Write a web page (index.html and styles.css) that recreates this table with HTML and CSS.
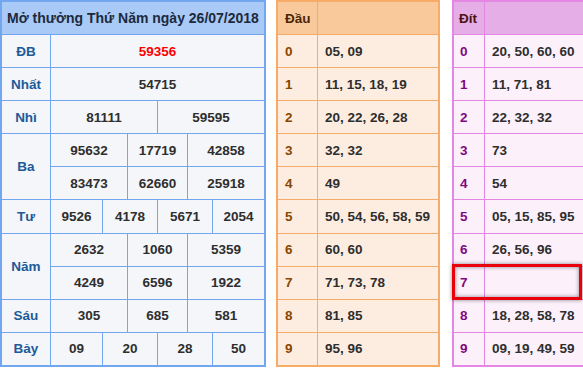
FILE: index.html
```html
<!DOCTYPE html>
<html lang="vi">
<head>
  <meta charset="UTF-8" />
  <meta name="viewport" content="width=device-width, initial-scale=1.0" />
  <title>Kết quả xổ số 26/07/2018</title>
  <link rel="stylesheet" href="styles.css">
</head>
<body>

  <div class="board">

    <!-- Bảng kết quả -->
    <div class="result">
      <div class="result-title">Mở thưởng Thứ Năm ngày 26/07/2018</div>

      <div class="lbl">ĐB</div>
      <div class="num span-6 special">59356</div>

      <div class="lbl">Nhất</div>
      <div class="num span-6">54715</div>

      <div class="lbl">Nhì</div>
      <div class="num span-3">81111</div>
      <div class="num span-3">59595</div>

      <div class="lbl rows-2">Ba</div>
      <div class="num span-2">95632</div>
      <div class="num span-2">17719</div>
      <div class="num span-2">42858</div>
      <div class="num span-2">83473</div>
      <div class="num span-2">62660</div>
      <div class="num span-2">25918</div>

      <div class="lbl">Tư</div>
      <div class="num">9526</div>
      <div class="num span-2">4178</div>
      <div class="num span-2">5671</div>
      <div class="num">2054</div>

      <div class="lbl rows-2">Năm</div>
      <div class="num span-2">2632</div>
      <div class="num span-2">1060</div>
      <div class="num span-2">5359</div>
      <div class="num span-2">4249</div>
      <div class="num span-2">6596</div>
      <div class="num span-2">1922</div>

      <div class="lbl">Sáu</div>
      <div class="num span-2">305</div>
      <div class="num span-2">685</div>
      <div class="num span-2">581</div>

      <div class="lbl">Bảy</div>
      <div class="num">09</div>
      <div class="num span-2">20</div>
      <div class="num span-2">28</div>
      <div class="num">50</div>
    </div>

    <!-- Loto đầu -->
    <div class="loto loto-head">
      <div class="loto-th">Đầu</div><div class="loto-th"></div>
      <div class="loto-key">0</div><div class="loto-val">05, 09</div>
      <div class="loto-key">1</div><div class="loto-val">11, 15, 18, 19</div>
      <div class="loto-key">2</div><div class="loto-val">20, 22, 26, 28</div>
      <div class="loto-key">3</div><div class="loto-val">32, 32</div>
      <div class="loto-key">4</div><div class="loto-val">49</div>
      <div class="loto-key">5</div><div class="loto-val">50, 54, 56, 58, 59</div>
      <div class="loto-key">6</div><div class="loto-val">60, 60</div>
      <div class="loto-key">7</div><div class="loto-val">71, 73, 78</div>
      <div class="loto-key">8</div><div class="loto-val">81, 85</div>
      <div class="loto-key">9</div><div class="loto-val">95, 96</div>
    </div>

    <!-- Loto đít -->
    <div class="loto-wrap">
      <div class="loto-clip">
        <div class="loto loto-tail">
          <div class="loto-th">Đít</div><div class="loto-th"></div>
          <div class="loto-key">0</div><div class="loto-val">20, 50, 60, 60</div>
          <div class="loto-key">1</div><div class="loto-val">11, 71, 81</div>
          <div class="loto-key">2</div><div class="loto-val">22, 32, 32</div>
          <div class="loto-key">3</div><div class="loto-val">73</div>
          <div class="loto-key">4</div><div class="loto-val">54</div>
          <div class="loto-key">5</div><div class="loto-val">05, 15, 85, 95</div>
          <div class="loto-key">6</div><div class="loto-val">26, 56, 96</div>
          <div class="loto-key">7</div><div class="loto-val"></div>
          <div class="loto-key">8</div><div class="loto-val">18, 28, 58, 78</div>
          <div class="loto-key">9</div><div class="loto-val">09, 19, 49, 59</div>
        </div>
      </div>
      <div class="highlight"></div>
    </div>

  </div>

</body>
</html>
```

FILE: styles.css
```css
* { margin: 0; padding: 0; box-sizing: border-box; }
body {
  font-family: 'Liberation Sans', Arial, sans-serif;
  font-weight: bold;
  font-size: 13.5px;
  color: #2e2e2e;
  background: #fff;
  overflow: hidden;
}

.board {
  display: flex;
  align-items: flex-start;
}

/* --- result table --- */
.result {
  display: grid;
  grid-template-columns: 48px 51px 24px 29px 29px 24px 51px;
  grid-template-rows: 32px repeat(10, 32.1px);
  gap: 1px;
  width: 266px;
  flex-shrink: 0;
  border: 2px solid #72a6ee;
  background: #72a6ee;
}
.result > div {
  display: flex;
  align-items: center;
  justify-content: center;
  background: #f4f6fa;
}
.result .result-title {
  grid-column: 1 / -1;
  background: #a9c9f6;
  color: #1c2a3e;
  font-size: 14px;
}
.result .lbl { color: #1d5a98; }
.result .rows-2 { grid-row: span 2; }
.result .span-2 { grid-column: span 2; }
.result .span-3 { grid-column: span 3; }
.result .span-6 { grid-column: span 6; }
.result .special { color: #f00; }

/* --- loto tables --- */
.loto {
  display: grid;
  grid-template-rows: 32px repeat(10, 32.1px);
  gap: 1px;
  border: 2px solid;
}
.loto > div {
  display: flex;
  align-items: center;
  padding-left: 7px;
}

.loto-head {
  margin-left: 10px;
  width: 164px;
  flex-shrink: 0;
  grid-template-columns: 39px 120px;
  border-color: #f6ac68;
  background: #f6ac68;
}
.loto-head .loto-th { background: #fac99b; color: #4a2508; }
.loto-head .loto-key { background: #fdede1; color: #8a4500; }
.loto-head .loto-val { background: #fdede1; }

.loto-wrap {
  position: relative;
  flex: 1;
  min-width: 0;
  margin-left: 12px;
}
.loto-clip { overflow: hidden; }
.loto-tail {
  width: 175px;
  grid-template-columns: 30px 140px;
  border-color: #e487e4;
  background: #e487e4;
}
.loto-tail .loto-th { background: #e5aee7; color: #4d1212; padding-left: 5px; }
.loto-tail .loto-key { background: #fcf0fb; color: #80097f; padding-left: 6px; }
.loto-tail .loto-val { background: #fcf0fb; }

.highlight {
  position: absolute;
  left: 0;
  top: 264px;
  width: 130px;
  height: 36px;
  border: 3px solid #e8000b;
  box-shadow: 0 0 4px rgba(0, 0, 0, 0.45), inset 0 0 4px rgba(0, 0, 0, 0.45);
}
```
